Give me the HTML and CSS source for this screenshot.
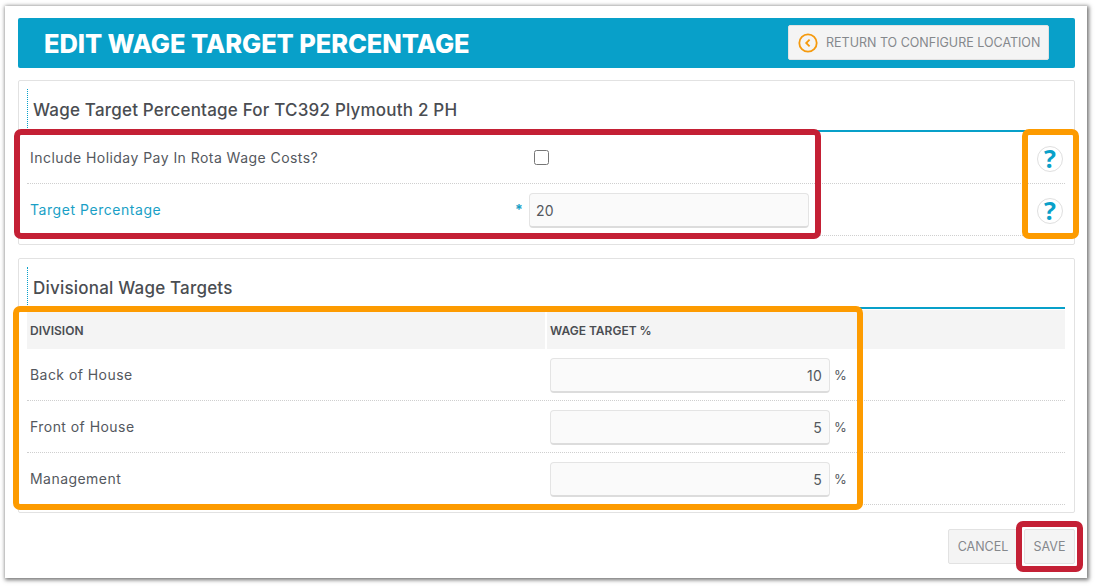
FILE: index.html
```html
<!DOCTYPE html>
<html lang="en">
<head>
<meta charset="utf-8">
<title>Edit Wage Target Percentage</title>
<link rel="stylesheet" href="styles.css">
</head>
<body>
<main class="window">
  <header class="page-header">
    <h1>EDIT WAGE TARGET PERCENTAGE</h1>
    <button class="btn btn-return" type="button">
      <svg class="back-icon" viewBox="0 0 20 20" aria-hidden="true"><circle cx="10" cy="10" r="8.7"/><path d="M11.6 6.6 8.2 10l3.4 3.4"/></svg>
      RETURN TO CONFIGURE LOCATION
    </button>
  </header>

  <section class="panel panel-settings">
    <h2 class="panel-title">Wage Target Percentage For TC392 Plymouth 2 PH</h2>
    <div class="form-row">
      <label class="form-label">Include Holiday Pay In Rota Wage Costs?</label>
      <div class="form-field"><input class="check" type="checkbox"></div>
      <span class="help">?</span>
    </div>
    <div class="form-row">
      <label class="form-label required">Target Percentage</label>
      <span class="star">*</span>
      <div class="form-field"><input class="text-input" type="text" value="20"></div>
      <span class="help">?</span>
    </div>
  </section>

  <section class="panel panel-table">
    <h2 class="panel-title">Divisional Wage Targets</h2>
    <div class="table-head">
      <div class="th">DIVISION</div>
      <div class="th">WAGE TARGET %</div>
    </div>
    <div class="table-row">
      <div class="td">Back of House</div>
      <div class="td-input"><input class="text-input num" type="text" value="10"><span class="pct">%</span></div>
    </div>
    <div class="table-row">
      <div class="td">Front of House</div>
      <div class="td-input"><input class="text-input num" type="text" value="5"><span class="pct">%</span></div>
    </div>
    <div class="table-row">
      <div class="td">Management</div>
      <div class="td-input"><input class="text-input num" type="text" value="5"><span class="pct">%</span></div>
    </div>
  </section>

  <footer class="actions">
    <button class="btn btn-cancel" type="button">CANCEL</button>
    <button class="btn btn-save" type="button">SAVE</button>
  </footer>
</main>

<div class="mark mark-red mark-form"></div>
<div class="mark mark-orange mark-help"></div>
<div class="mark mark-orange mark-table"></div>
<div class="mark mark-red mark-save"></div>
</body>
</html>
```

FILE: styles.css
```css
* { box-sizing: border-box; }

html, body {
  margin: 0;
  height: 100%;
  background: #fff;
  overflow: hidden;
}

body {
  padding: 6px 8px 0 5px;
  font-family: Inter, "Liberation Sans", sans-serif;
  font-size: 14px;
  color: #54585e;
}

.window {
  height: 572px;
  padding: 12px 12px 0 13px;
  background: #fff;
  box-shadow: 1px 1px 4px 1px rgba(0, 0, 0, 0.55);
}

.page-header {
  display: flex;
  align-items: center;
  justify-content: space-between;
  height: 50px;
  padding: 0 26px;
  background: #08a0c9;
  border-radius: 2px;
}

.page-header h1 {
  margin: 0;
  font-size: 25.5px;
  font-weight: 800;
  letter-spacing: -0.1px;
  color: #fff;
}

.btn {
  font-family: inherit;
  font-size: 12.5px;
  color: #85888c;
  background: #f4f4f4;
  border: 1px solid #e2e2e2;
  border-radius: 2px;
  height: 35px;
  padding: 0;
}

.btn-return {
  display: flex;
  align-items: center;
  gap: 8px;
  width: 261px;
  margin-top: -1px;
  padding-left: 9px;
  white-space: nowrap;
}

.back-icon {
  width: 20px;
  height: 20px;
  fill: none;
  stroke: #f59a0e;
  stroke-width: 1.8;
}

.panel {
  background: #fff;
  border: 1px solid #e2e2e2;
  border-radius: 2px;
  padding: 8px 9px 0 8px;
}

.panel-settings { height: 165px; margin-top: 12px; }
.panel-table { height: 255px; margin-top: 13px; }

.panel-title {
  margin: 0;
  height: 43px;
  padding: 10px 0 0 5px;
  font-size: 17px;
  line-height: 22px;
  font-weight: 500;
  letter-spacing: 0.2px;
  color: #4a4d52;
  border-left: 1px dotted #08a0c9;
  border-bottom: 2px solid #08a0c9;
}

.panel-table .panel-title { height: 42px; }

.form-row {
  display: flex;
  align-items: center;
  height: 52px;
  border-bottom: 1px dotted #cfcfcf;
}

.form-label {
  width: 488px;
  padding-left: 3px;
  letter-spacing: 0.45px;
}

.form-row .form-field { width: 280px; margin-left: 14px; flex: none; }
.form-row .star + .form-field { margin-left: 7px; }
.required { color: #1a9fc6; letter-spacing: 0.55px; }

.star {
  width: 7px;
  color: #1a9fc6;
  font-weight: 700;
  flex: none;
}

.check {
  display: block;
  width: 15px;
  height: 15px;
  margin: 0 0 0 5px;
}

.text-input {
  width: 280px;
  height: 35px;
  margin-top: 2px;
  padding: 0 7px 0 6px;
  font-family: inherit;
  font-size: 14px;
  letter-spacing: 0.2px;
  color: #54585e;
  background: #fafafa;
  border: 1px solid #e4e4e4;
  border-bottom: 2px solid #dcdcdc;
  border-radius: 4px;
  outline: none;
}

.num { text-align: right; }

.help {
  width: 26px;
  height: 26px;
  margin-top: 2px;
  margin-left: auto;
  margin-right: 2px;
  border: 1px solid #dfdfdf;
  border-radius: 50%;
  font-family: "Open Sans", sans-serif;
  font-size: 25px;
  line-height: 23px;
  font-weight: 700;
  text-align: center;
  color: #08a0c9;
}

.table-head {
  display: grid;
  grid-template-columns: 518px 518px;
  gap: 2px;
  height: 39px;
  margin-top: 1px;
}

.th {
  display: flex;
  align-items: center;
  padding: 1px 0 0 3px;
  background: #f4f4f4;
  font-size: 12px;
  font-weight: 600;
  color: #4a4d52;
}

.table-row {
  display: grid;
  grid-template-columns: 518px 518px;
  gap: 2px;
  height: 52px;
  align-items: center;
  border-bottom: 1px dotted #cfcfcf;
}

.td { padding-left: 3px; letter-spacing: 0.45px; }

.td-input {
  display: flex;
  align-items: center;
  gap: 4px;
  padding-left: 3px;
}

.pct { font-size: 13px; }

.actions {
  display: flex;
  justify-content: flex-end;
  gap: 6px;
  margin-top: 16px;
}

.btn-cancel { width: 70px; }
.btn-save { width: 51px; }

.mark {
  position: absolute;
  border: 6px solid;
  border-radius: 7px;
  pointer-events: none;
}
.mark-red { border-color: #c42035; }
.mark-orange { border-color: #fd9b00; }
.mark-form { left: 14px; top: 129px; width: 807px; height: 110px; }
.mark-help { left: 1022px; top: 129px; width: 57px; height: 110px; }
.mark-table { left: 13px; top: 306px; width: 850px; height: 204px; }
.mark-save { left: 1016px; top: 521px; width: 67px; height: 51px; }
```
